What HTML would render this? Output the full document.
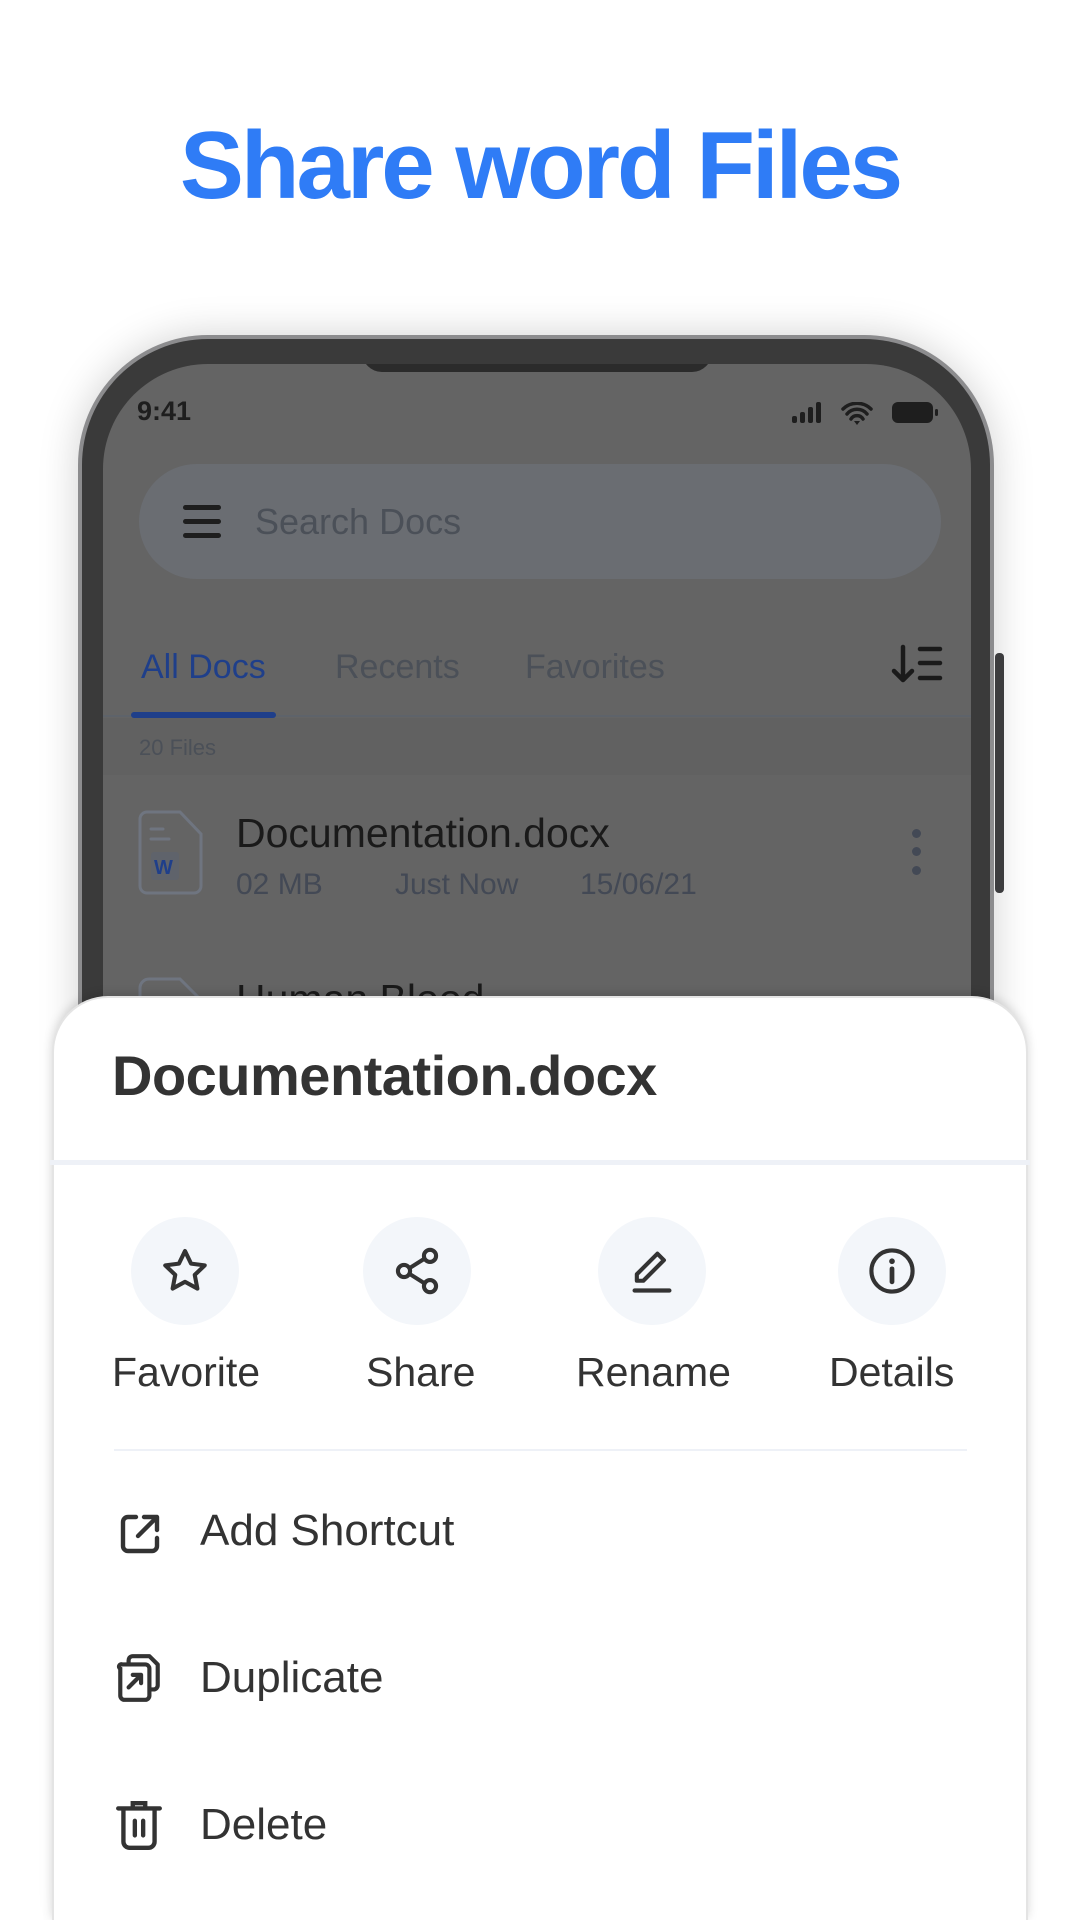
<!DOCTYPE html>
<html><head><meta charset="utf-8">
<style>
*{margin:0;padding:0;box-sizing:border-box}
html,body{width:1080px;height:1920px;overflow:hidden}
body{background:#fff;position:relative;font-family:"Liberation Sans",sans-serif}
.abs{position:absolute}
h1{position:absolute;left:0;width:1080px;top:116px;text-align:center;font-size:96px;font-weight:bold;color:#2f7cf6;letter-spacing:-3px;line-height:100px}
.phone{left:78px;top:335px;width:916px;height:1585px;border-radius:130px 130px 0 0;background:#3a3a3a;border:4px solid #8c8c8e;border-bottom:none;box-shadow:0 0 40px rgba(0,0,0,.18)}
.screen{left:103px;top:364px;width:868px;height:1556px;border-radius:105px 105px 0 0;background:#646464;overflow:hidden}
.t{position:absolute;white-space:nowrap}
.sheet{left:52px;top:996px;width:976px;height:924px;background:#fff;border-radius:56px 56px 0 0;box-shadow:0 -2px 10px rgba(0,0,0,.15);border:2px solid #e4e4e4;border-bottom:none}
.circ{position:absolute;width:108px;height:108px;border-radius:50%;background:#f3f6fa;top:1217px}
.circ svg{position:absolute;left:28px;top:28px}
.lab{position:absolute;top:1349px;font-size:41px;color:#333;white-space:nowrap}
.item{position:absolute;left:200px;font-size:44px;color:#333;white-space:nowrap}
</style></head><body>
<h1>Share word Files</h1>
<div class="abs phone"></div>
<div class="abs" style="left:995px;top:653px;width:9px;height:240px;background:#3c3c3e;border-radius:4px"></div>
<div class="abs screen">
  <div class="abs" style="left:259px;top:-20px;width:350px;height:28px;background:#2b2b2b;border-radius:0 0 20px 20px"></div>
  <div class="t" style="left:34px;top:32px;font-size:27px;font-weight:bold;color:#1e1e1e">9:41</div>
  <svg class="abs" style="left:689px;top:38px" width="150" height="26" viewBox="0 0 150 26">
    <rect x="0" y="14" width="5" height="7" rx="2" fill="#1e1e1e"/><rect x="8" y="10" width="5" height="11" rx="2" fill="#1e1e1e"/><rect x="16" y="5" width="5" height="16" rx="2" fill="#1e1e1e"/><rect x="24" y="0" width="5" height="21" rx="2" fill="#1e1e1e"/>
    <path d="M51 7a20 20 0 0 1 28 0M55 12a13 13 0 0 1 20 0M59 17a7 7 0 0 1 12 0" stroke="#1e1e1e" stroke-width="3.5" fill="none" stroke-linecap="round"/><path d="M62 19l3 4 3-4z" fill="#1e1e1e"/>
    <rect x="100" y="0" width="41" height="21" rx="6" fill="#1e1e1e"/><rect x="143" y="7" width="3" height="7" rx="1.5" fill="#1e1e1e"/>
  </svg>
  <div class="abs" style="left:36px;top:100px;width:802px;height:115px;border-radius:58px;background:#6a6d72"></div>
  <div class="abs" style="left:80px;top:141px;width:38px;height:5px;background:#1e1e1e;border-radius:3px"></div>
  <div class="abs" style="left:80px;top:155px;width:38px;height:5px;background:#1e1e1e;border-radius:3px"></div>
  <div class="abs" style="left:80px;top:169px;width:38px;height:5px;background:#1e1e1e;border-radius:3px"></div>
  <div class="t" style="left:152px;top:137px;font-size:36px;color:#4b5058">Search Docs</div>
  <div class="t" style="left:38px;top:284px;font-size:34px;color:#1f3f8a">All Docs</div>
  <div class="t" style="left:232px;top:284px;font-size:34px;color:#4b5058">Recents</div>
  <div class="t" style="left:422px;top:284px;font-size:34px;color:#4b5058">Favorites</div>
  <svg class="abs" style="left:788px;top:280px" width="52" height="40" viewBox="0 0 52 40">
    <path d="M12 3v33M3 27l9 9 9-9" stroke="#1a1a1a" stroke-width="4.5" fill="none" stroke-linecap="round" stroke-linejoin="round"/>
    <path d="M29 5h20M29 19h20M29 34h20" stroke="#1a1a1a" stroke-width="4.5" stroke-linecap="round"/>
  </svg>
  <div class="abs" style="left:0;top:351px;width:868px;height:2px;background:#5e636a"></div>
  <div class="abs" style="left:28px;top:348px;width:145px;height:6px;background:#1f3f8a;border-radius:3px"></div>
  <div class="abs" style="left:0;top:354px;width:868px;height:57px;background:#616161"></div>
  <div class="t" style="left:36px;top:371px;font-size:22px;color:#4b5058">20 Files</div>
  <svg class="abs" style="left:35px;top:446px" width="66" height="86" viewBox="0 0 66 86">
    <path d="M9 2h33l21 22v52a7 7 0 0 1-7 7H9a7 7 0 0 1-7-7V9a7 7 0 0 1 7-7z" fill="none" stroke="#6f7580" stroke-width="3"/>
    <path d="M13 19h12M13 29h18" stroke="#6f7580" stroke-width="3" stroke-linecap="round"/>
    <rect x="13" y="42" width="28" height="28" rx="3" fill="#5f636b"/>
    <text x="16" y="64" font-family="Liberation Sans" font-weight="bold" font-size="20" fill="#1f3f8a">W</text>
  </svg>
  <div class="t" style="left:133px;top:446px;font-size:41px;color:#1a1a1a">Documentation.docx</div>
  <div class="t" style="left:133px;top:504px;font-size:30px;color:#434955">02 MB</div>
  <div class="t" style="left:292px;top:504px;font-size:30px;color:#434955">Just Now</div>
  <div class="t" style="left:477px;top:504px;font-size:30px;color:#434955">15/06/21</div>
  <div class="abs" style="left:809px;top:465px;width:9px;height:9px;border-radius:50%;background:#434955"></div>
  <div class="abs" style="left:809px;top:483px;width:9px;height:9px;border-radius:50%;background:#434955"></div>
  <div class="abs" style="left:809px;top:502px;width:9px;height:9px;border-radius:50%;background:#434955"></div>
  <svg class="abs" style="left:35px;top:612px" width="66" height="40" viewBox="0 0 66 40"><path d="M2 40V12a9 9 0 0 1 9-9h31l21 21v16" fill="none" stroke="#6f7580" stroke-width="3"/></svg>
  <div class="t" style="left:133px;top:612px;font-size:41px;color:#1a1a1a">Human Blood</div>
</div>
<div class="abs sheet"></div>
<div class="t" style="left:112px;top:1043px;font-size:56px;font-weight:bold;color:#333;letter-spacing:-0.5px">Documentation.docx</div>
<div class="abs" style="left:50px;top:1160px;width:980px;height:5px;background:#eef1f7"></div>
<div class="circ" style="left:131px"><svg width="52" height="52" viewBox="0 0 24 24"><path d="M12 2.8l2.8 5.8 6.3.8-4.6 4.4 1.2 6.3L12 17l-5.7 3.1 1.2-6.3-4.6-4.4 6.3-.8z" fill="none" stroke="#333" stroke-width="1.9" stroke-linejoin="round"/></svg></div>
<div class="circ" style="left:363px"><svg width="52" height="52" viewBox="0 0 24 24"><circle cx="18" cy="5" r="2.8" fill="none" stroke="#333" stroke-width="1.9"/><circle cx="6" cy="12" r="2.8" fill="none" stroke="#333" stroke-width="1.9"/><circle cx="18" cy="19" r="2.8" fill="none" stroke="#333" stroke-width="1.9"/><path d="M8.5 10.7l7-4.4M8.5 13.3l7 4.4" stroke="#333" stroke-width="1.9"/></svg></div>
<div class="circ" style="left:598px"><svg width="52" height="52" viewBox="0 0 24 24"><path d="M5 16.5v-3L14.5 4l3 3L8 16.5z" fill="none" stroke="#333" stroke-width="1.9" stroke-linejoin="round"/><path d="M4 21h16" stroke="#333" stroke-width="2" stroke-linecap="round"/></svg></div>
<div class="circ" style="left:838px"><svg width="52" height="52" viewBox="0 0 24 24"><circle cx="12" cy="12" r="9.5" fill="none" stroke="#333" stroke-width="1.9"/><path d="M12 11v6" stroke="#333" stroke-width="2.2" stroke-linecap="round"/><circle cx="12" cy="7.5" r="1.3" fill="#333"/></svg></div>
<div class="lab" style="left:112px">Favorite</div>
<div class="lab" style="left:366px">Share</div>
<div class="lab" style="left:576px">Rename</div>
<div class="lab" style="left:829px">Details</div>
<div class="abs" style="left:114px;top:1449px;width:853px;height:2px;background:#eef1f7"></div>
<svg class="abs" style="left:116px;top:1510px" width="48" height="48" viewBox="0 0 24 24"><path d="M10 3.5H6A2.5 2.5 0 0 0 3.5 6v12A2.5 2.5 0 0 0 6 20.5h12a2.5 2.5 0 0 0 2.5-2.5v-4" fill="none" stroke="#333" stroke-width="2.2" stroke-linecap="round"/><path d="M11 13l9-9M14 3.5h6.5V10" fill="none" stroke="#333" stroke-width="2.2" stroke-linecap="round" stroke-linejoin="round"/></svg>
<div class="item" style="left:200px;top:1506px">Add Shortcut</div>
<svg class="abs" style="left:114px;top:1652px" width="50" height="52" viewBox="0 0 24 25"><path d="M7 6V4a2 2 0 0 1 2-2h8l4 4v10a2 2 0 0 1-2 2h-2" fill="none" stroke="#333" stroke-width="2" stroke-linejoin="round"/><path d="M4 6h11a2 2 0 0 1 2 2v13a2 2 0 0 1-2 2H5a2 2 0 0 1-2-2V8a1 1 0 0 1 1-2z" fill="#fff" stroke="#333" stroke-width="2"/><path d="M7 17l6-6M9 11h4v4" fill="none" stroke="#333" stroke-width="2" stroke-linecap="round" stroke-linejoin="round"/></svg>
<div class="item" style="left:200px;top:1653px">Duplicate</div>
<svg class="abs" style="left:114px;top:1798px" width="50" height="54" viewBox="0 0 24 26"><path d="M2 5h20M9 5V2.5h6V5" fill="none" stroke="#333" stroke-width="2.1" stroke-linecap="round"/><path d="M4.5 5v16a3 3 0 0 0 3 3h9a3 3 0 0 0 3-3V5" fill="none" stroke="#333" stroke-width="2.1"/><path d="M10 11v7M14 11v7" stroke="#333" stroke-width="2.1" stroke-linecap="round"/></svg>
<div class="item" style="left:200px;top:1800px">Delete</div>
</body></html>
